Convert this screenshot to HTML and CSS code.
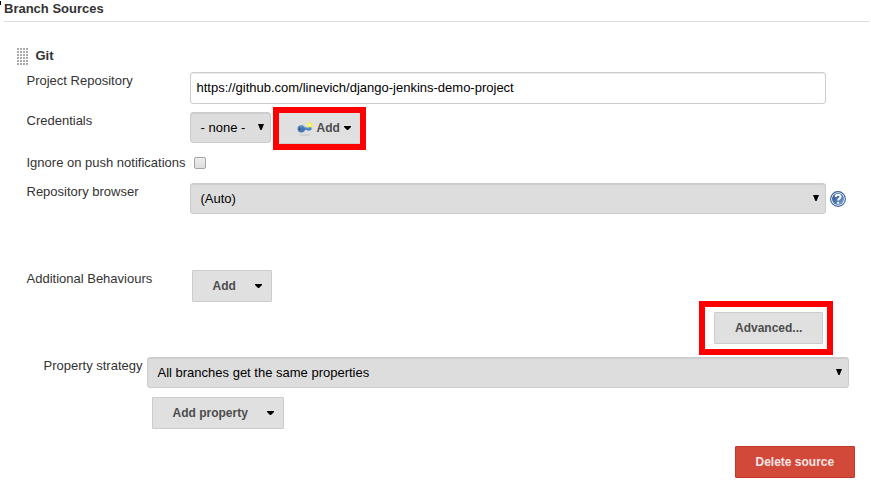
FILE: index.html
```html
<!DOCTYPE html>
<html lang="en">
<head>
<meta charset="utf-8">
<title>Branch Sources</title>
<link rel="stylesheet" href="styles.css">
</head>
<body>
<main class="page">
  <i class="tick"></i>
  <h1 class="section-title">Branch Sources</h1>
  <div class="source-head"><i class="handle"></i><b>Git</b></div>
  <div class="row row-repo">
    <span class="label">Project Repository</span>
    <div class="field text-field">https://github.com/linevich/django-jenkins-demo-project</div>
  </div>
  <div class="row row-cred">
    <span class="label">Credentials</span>
    <div class="field select small"><span>- none -</span><svg class="arrow" viewBox="0 0 6 6"><path d="M0 0h6L3.6 6H2.4z"/></svg></div>
    <div class="mark mark-add">
      <div class="button key-button">
        <svg class="key" viewBox="0 0 16 16">
          <ellipse cx="7.5" cy="15" rx="5.5" ry=".8" fill="#c9c9c9"/>
          <path d="M7 7h7.5v3h-1l-.7 1-1-.8-1 .8-.8-1H7z" fill="#4b83c0"/>
          <ellipse cx="4.4" cy="8.8" rx="3.8" ry="3.6" fill="#4577b2"/>
          <path d="M3 6.9c1.8-1.1 3.5-.7 4.4.8h6.3" fill="none" stroke="#79a7d8"/>
          <circle cx="2.7" cy="9" r="1" fill="#315887"/>
          <path d="M12 1.6l1 2 2.5-.3-1.2 2 1 2-2.8-.7-2.3.8.8-2.2L9.4 3.5l2 .1z" fill="#f6ef35" stroke="#f3ec58" stroke-width=".6"/>
          <circle cx="12.3" cy="4.7" r="1.2" fill="#ffff9a"/>
        </svg>
        <span>Add</span><svg class="caret" viewBox="0 0 7 4"><path d="M0 0h7v1L4 4H3L0 1z"/></svg>
      </div>
    </div>
  </div>
  <div class="row row-check">
    <span class="label">Ignore on push notifications</span>
    <i class="checkbox"></i>
  </div>
  <div class="row row-browser">
    <span class="label">Repository browser</span>
    <div class="field select wide"><span>(Auto)</span><svg class="arrow" viewBox="0 0 6 6"><path d="M0 0h6L3.6 6H2.4z"/></svg></div>
    <svg class="help" viewBox="0 0 16 16">
      <defs><linearGradient id="blue" x1="0" y1="0" x2="1" y2="1"><stop offset="0" stop-color="#234b8c"/><stop offset="1" stop-color="#7fa5d4"/></linearGradient></defs>
      <circle cx="8" cy="8" r="7.4" fill="#fff" stroke="#365f9e" stroke-width="1.1"/>
      <circle cx="8" cy="8" r="6" fill="url(#blue)"/>
      <path d="M5.6 6C5.6 2.9 10.6 3 10.5 5.9 10.4 7.6 8.1 7.5 8.1 9.6M8.1 10.9v1.9" fill="none" stroke="#fff" stroke-width="1.9"/>
    </svg>
  </div>
  <div class="row row-add">
    <span class="label">Additional Behaviours</span>
    <div class="button menu"><span>Add</span><svg class="caret" viewBox="0 0 7 4"><path d="M0 0h7v1L4 4H3L0 1z"/></svg></div>
  </div>
  <div class="row-advanced"><div class="mark mark-advanced"><div class="button">Advanced...</div></div></div>
  <div class="row row-property">
    <span class="label">Property strategy</span>
    <div class="field select property"><span>All branches get the same properties</span><svg class="arrow" viewBox="0 0 6 6"><path d="M0 0h6L3.6 6H2.4z"/></svg></div>
  </div>
  <div class="property-action"><div class="button menu"><span>Add property</span><svg class="caret" viewBox="0 0 7 4"><path d="M0 0h7v1L4 4H3L0 1z"/></svg></div></div>
  <div class="delete-action"><div class="button danger">Delete source</div></div>
</main>
</body>
</html>
```
FILE: styles.css
```css
* { box-sizing: border-box; }
body { margin: 0; background: #fff; color: #333; font: 13px/16px "Liberation Sans", Arial, sans-serif; }
.page { position: relative; width: 871px; height: 487px; overflow: hidden; display: flex; flex-direction: column; }
.tick { position: absolute; left: 0; top: 1px; width: 1px; height: 4px; background: #000; }
.section-title { margin: 0 2px 0 4px; height: 22px; flex: none; font-size: 13px; line-height: 17px; border-bottom: 1px solid #ddd; }
.source-head { height: 50px; flex: none; padding: 26px 0 0 17px; display: flex; align-items: flex-start; gap: 6.5px; }
.handle { width: 12px; height: 17px; background: radial-gradient(circle at 1px 1px, #aaa 0 .7px, transparent 1.2px) 0 0 / 3px 3px; }
.row { display: flex; align-items: flex-start; flex: none; }
.label { width: 163.5px; margin-left: 26.5px; padding-top: 1px; flex: none; white-space: nowrap; }
.field { height: 31px; border: 1px solid #ccc; border-radius: 3px; color: #000; display: flex; align-items: center; box-shadow: inset 0 1px 1px rgba(0,0,0,.075); }
.text-field { width: 636px; height: 32px; padding: 0 5.5px; }
.select { background: #ddd; padding: 0 6px 0 9.5px; justify-content: space-between; }
.small { width: 81px; }
.wide { width: 636px; }
.property { width: 702px; }
.arrow { width: 6px; height: 6px; flex: none; margin-top: -2px; }
.row-repo { height: 40px; }
.row-cred { height: 44px; }
.row-check { height: 27px; }
.row-check .label { padding-top: 0; margin-top: -1px; width: 167.5px; }
.row-browser { height: 87px; }
.row-add { height: 31px; }
.row-add .label { width: 165.5px; }
.checkbox { width: 12px; height: 12px; margin-top: 1px; border: 1px solid #a5a5a5; border-radius: 2px; background: linear-gradient(#eee, #ddd); }
.mark { border: 6px solid #f00; }
.mark-add { margin: -5px 0 0 2px; width: 93px; height: 43px; }
.mark-advanced { width: 134px; height: 54px; padding: 5px 4px 5px 9px; }
.button { height: 32px; padding: 0 20px; display: flex; align-items: center; white-space: nowrap; border: 1px solid #ccc; border-radius: 1px; background: #e0e0e0; color: #4d4d4d; font-weight: bold; font-size: 12px; }
.key-button { width: 81px; height: 31px; padding: 0 0 0 18px; border-width: 0 0 1px; }
.key { width: 16px; height: 16px; margin-right: 3.5px; }
.caret { width: 7px; height: 4px; flex: none; margin-left: 4px; fill: #000; }
.menu { padding-left: 19.5px; padding-right: 9px; justify-content: space-between; }
.row-add .menu { width: 80px; }
.help { width: 16px; height: 16px; margin: 8px 0 0 4px; }
.row-advanced { height: 56px; flex: none; padding-left: 699px; }
.row-property { height: 40px; }
.row-property .label { margin-left: 43.5px; width: 103.5px; }
.property-action { height: 49px; flex: none; padding-left: 152px; }
.property-action .menu { width: 132px; }
.delete-action { flex: none; display: flex; justify-content: flex-end; padding-right: 16px; }
.danger { width: 120px; padding-left: 19.5px; background: #d24939; border-color: #c03828; color: #f5e6e6; }
```
